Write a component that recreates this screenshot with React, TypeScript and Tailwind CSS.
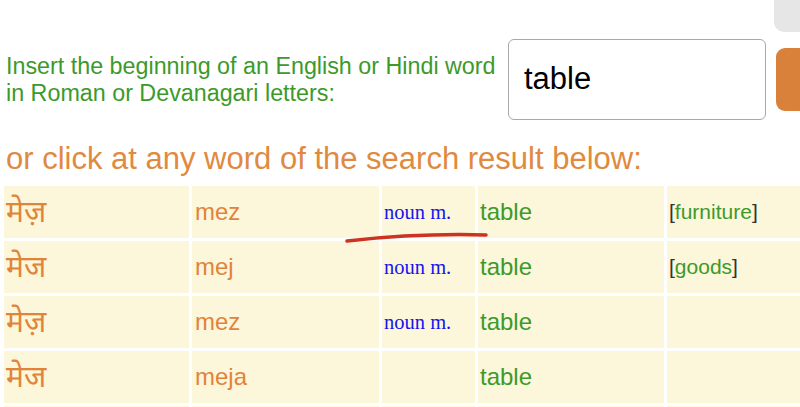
import React from "react";

const rows = [
  { hi: "मेज़", tr: "mez", pos: "noun m.", en: "table", cat: "furniture" },
  { hi: "मेज", tr: "mej", pos: "noun m.", en: "table", cat: "goods" },
  { hi: "मेज़", tr: "mez", pos: "noun m.", en: "table", cat: "" },
  { hi: "मेज", tr: "meja", pos: "", en: "table", cat: "" },
  { hi: "", tr: "", pos: "", en: "", cat: "" },
];

export default function App() {
  return (
    <div className="relative w-[800px] h-[407px] overflow-hidden bg-white font-['Liberation_Sans',Arial,sans-serif]">
      <div className="flex justify-end h-[32px]">
        <div className="w-[26px] h-full bg-[#e6e6e6] rounded-bl-[10px]" />
      </div>
      <div className="flex items-center mt-[7px] h-[81px]">
        <div className="shrink-0 pl-[6px] w-[508px] text-[#3c9a2a] text-[23.3px] leading-[27px]">
          Insert the beginning of an English or Hindi word
          <br />
          in Roman or Devanagari letters:
        </div>
        <div className="shrink-0 w-[258px] h-[81px] border border-[#a8a8a8] rounded-[6px] flex items-center pl-[15px] text-[31px] text-black">
          table
        </div>
        <div className="shrink-0 ml-[10px] w-[40px] h-[63px] bg-[#d9803a] rounded-l-[9px]" />
      </div>
      <div className="mt-[21px] pl-[6px] text-[#e08a3f] text-[31px] leading-[36px]">
        or click at any word of the search result below:
      </div>
      <div className="mt-[9px] ml-[4px] grid grid-cols-[185px_187px_93px_186px_1fr] auto-rows-[52px] gap-[3px]">
        {rows.map((r, i) => (
          <React.Fragment key={i}>
            <div className="bg-[#fcf6da] flex items-center pl-[2px] pt-[5px] text-[#e0843a] text-[30px] font-['Noto_Sans_Devanagari','Noto_Sans',sans-serif]">
              {r.hi}
            </div>
            <div className="bg-[#fcf6da] flex items-center pl-[3px] text-[#e0843a] text-[24px]">
              {r.tr}
            </div>
            <div className="bg-[#fcf6da] flex items-center pl-[2px] text-[#1414ee] text-[20.5px] font-['Liberation_Serif','Times_New_Roman',serif]">
              {r.pos}
            </div>
            <div className="bg-[#fcf6da] flex items-center pl-[2px] text-[#3c9a2a] text-[24px]">
              {r.en}
            </div>
            <div className="bg-[#fcf6da] flex items-center pl-[2px] text-[21px]">
              {r.cat && (
                <span>
                  <span className="text-[#333333]">[</span>
                  <span className="text-[#3c9a2a]">{r.cat}</span>
                  <span className="text-[#333333]">]</span>
                </span>
              )}
            </div>
          </React.Fragment>
        ))}
      </div>
      <svg className="absolute left-0 top-0 pointer-events-none" width="800" height="407">
        <path d="M347 241 Q 420 233 486 235" stroke="#cc3322" strokeWidth="3.5" fill="none" strokeLinecap="round" />
      </svg>
    </div>
  );
}
